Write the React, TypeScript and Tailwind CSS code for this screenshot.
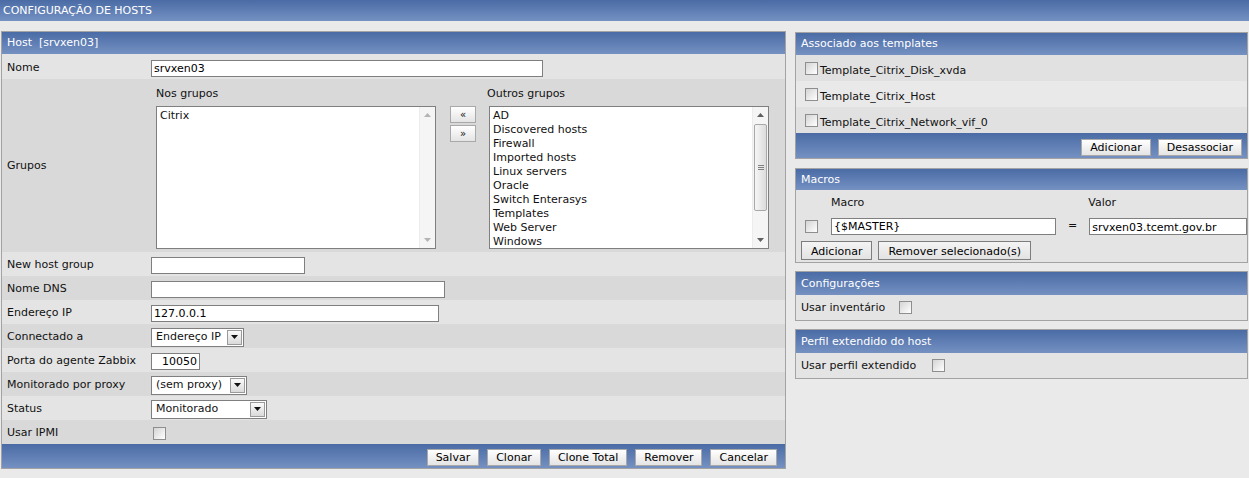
import type { ReactNode } from 'react'

const outros = [
  'AD',
  'Discovered hosts',
  'Firewall',
  'Imported hosts',
  'Linux servers',
  'Oracle',
  'Switch Enterasys',
  'Templates',
  'Web Server',
  'Windows',
]

function Header({ children, h = 'h-[22px]' }: { children: ReactNode; h?: string }) {
  return (
    <div className={`flex items-center bg-linear-to-b from-[#4a6ba5] to-[#7591c2] px-[5px] pt-px text-white ${h}`}>
      {children}
    </div>
  )
}

function Btn({ children }: { children: ReactNode }) {
  return (
    <button
      type="button"
      className="h-[17px] border border-[#a9a9a9] bg-linear-to-b from-white to-[#e4e4e4] px-[8px] pt-px leading-none text-black"
    >
      {children}
    </button>
  )
}

function GrayBtn({ children }: { children: ReactNode }) {
  return (
    <button
      type="button"
      className="h-[19px] border border-[#7d7d7d] bg-linear-to-b from-[#f4f4f4] to-[#e3e3e3] px-[9px] pt-px leading-none text-black"
    >
      {children}
    </button>
  )
}

function Check() {
  return (
    <span className="block h-[13px] w-[13px] border border-[#8e8e8e] bg-linear-to-br from-[#d4d4d4] to-white" />
  )
}

function TextBox({ value = '', w, right }: { value?: string; w: string; right?: boolean }) {
  return (
    <input
      readOnly
      defaultValue={value}
      className={`h-[17px] border border-[#7f7f7f] bg-white px-[2px] pt-px text-[11px] leading-none text-black outline-none ${w} ${right ? 'text-right' : ''}`}
    />
  )
}

function Select({ value, w }: { value: string; w: string }) {
  return (
    <div className={`flex h-[19px] items-center justify-between border border-[#7f7f7f] bg-white pl-[4px] pr-px ${w}`}>
      <span className="pt-px">{value}</span>
      <span className="flex h-[15px] w-[15px] items-center justify-center border border-[#9a9a9a] bg-linear-to-b from-[#fafafa] to-[#dadada]">
        <svg width="7" height="4" viewBox="0 0 7 4">
          <path d="M0 0h7L3.5 4z" fill="#111" />
        </svg>
      </span>
    </div>
  )
}

function Arrow({ up, color }: { up?: boolean; color: string }) {
  return (
    <svg width="7" height="4" viewBox="0 0 7 4">
      <path d={up ? 'M0 4h7L3.5 0z' : 'M0 0h7L3.5 4z'} fill={color} />
    </svg>
  )
}

function ListBox({ items, thumb }: { items: string[]; thumb?: boolean }) {
  return (
    <div className="flex h-[143px] w-[280px] border border-[#7f7f7f] bg-white">
      <div className="flex-1 pl-[3px] pt-[2px]">
        {items.map((it) => (
          <div key={it} className="h-[14px] leading-[14px]">
            {it}
          </div>
        ))}
      </div>
      <div className="flex w-[16px] flex-col items-center border-l border-[#ececec] bg-[#f5f5f5]">
        <div className="flex h-[16px] items-center">
          <Arrow up color={thumb ? '#606060' : '#b4b4b4'} />
        </div>
        <div className="flex w-full flex-1 flex-col px-px">
          {thumb && (
            <div className="mt-[1px] flex h-[87px] items-center justify-center rounded-[2px] border border-[#a8a8a8] bg-linear-to-r from-[#f6f6f6] to-[#dcdcdc]">
              <div className="flex flex-col gap-[1px]">
                <span className="block h-px w-[6px] bg-[#808080]" />
                <span className="block h-px w-[6px] bg-[#808080]" />
                <span className="block h-px w-[6px] bg-[#808080]" />
              </div>
            </div>
          )}
        </div>
        <div className="flex h-[16px] items-center">
          <Arrow color={thumb ? '#606060' : '#b4b4b4'} />
        </div>
      </div>
    </div>
  )
}

function Row({ label, dark, children }: { label: string; dark?: boolean; children: ReactNode }) {
  return (
    <div className={`flex h-[24px] items-center pt-[2px] ${dark ? 'bg-[#d9d9d9]' : 'bg-[#e4e4e4]'}`}>
      <div className="w-[149px] pl-[5px]">{label}</div>
      {children}
    </div>
  )
}

function HostPanel() {
  return (
    <div className="ml-px w-[785px] border border-[#a3a3a3]">
      <Header>Host&nbsp;&nbsp;[srvxen03]</Header>
      <div className="flex h-[25px] items-center bg-[#e4e4e4] pt-[3px]">
        <div className="w-[149px] pl-[5px]">Nome</div>
        <TextBox value="srvxen03" w="w-[392px]" />
      </div>
      <div className="flex h-[173px] items-center bg-[#d9d9d9]">
        <div className="w-[149px] pl-[5px] pt-[2px]">Grupos</div>
        <div className="flex h-full items-start pl-[5px] pt-[8px]">
          <div>
            <div className="h-[14px] leading-[14px]">Nos grupos</div>
            <div className="mt-[5px]">
              <ListBox items={['Citrix']} />
            </div>
          </div>
          <div className="ml-[14px] mt-[19px] flex flex-col gap-[2px]">
            <button type="button" className="h-[17px] w-[26px] border border-[#a9a9a9] bg-linear-to-b from-white to-[#e4e4e4] text-[10px] leading-none">
              «
            </button>
            <button type="button" className="h-[17px] w-[26px] border border-[#a9a9a9] bg-linear-to-b from-white to-[#e4e4e4] text-[10px] leading-none">
              »
            </button>
          </div>
          <div className="ml-[13px]">
            <div className="-ml-[2px] h-[14px] leading-[14px]">Outros grupos</div>
            <div className="mt-[5px]">
              <ListBox items={outros} thumb />
            </div>
          </div>
        </div>
      </div>
      <Row label="New host group">
        <TextBox w="w-[154px]" />
      </Row>
      <Row label="Nome DNS" dark>
        <TextBox w="w-[294px]" />
      </Row>
      <Row label="Endereço IP">
        <TextBox value="127.0.0.1" w="w-[288px]" />
      </Row>
      <Row label="Connectado a" dark>
        <Select value="Endereço IP" w="w-[93px]" />
      </Row>
      <Row label="Porta do agente Zabbix">
        <TextBox value="10050" w="w-[49px]" right />
      </Row>
      <Row label="Monitorado por proxy" dark>
        <Select value="(sem proxy)" w="w-[96px]" />
      </Row>
      <Row label="Status">
        <Select value="Monitorado" w="w-[116px]" />
      </Row>
      <Row label="Usar IPMI" dark>
        <span className="ml-[2px]">
          <Check />
        </span>
      </Row>
      <div className="flex h-[24px] items-center justify-end gap-[8px] bg-linear-to-b from-[#4a6ba5] to-[#7591c2] pr-[8px] pt-[2px]">
        <Btn>Salvar</Btn>
        <Btn>Clonar</Btn>
        <Btn>Clone Total</Btn>
        <Btn>Remover</Btn>
        <Btn>Cancelar</Btn>
      </div>
    </div>
  )
}

function SidePanels() {
  const templates = ['Template_Citrix_Disk_xvda', 'Template_Citrix_Host', 'Template_Citrix_Network_vif_0']
  return (
    <div className="mt-px w-[453px] shrink-0">
      <div className="border border-[#a3a3a3]">
        <Header>Associado aos templates</Header>
        {templates.map((t, i) => (
          <div key={t} className={`flex h-[26px] items-start gap-[2px] pl-[9px] pt-[7px] ${i === 1 ? 'bg-[#e9e9e9]' : 'bg-[#e1e1e1]'}`}>
            <Check />
            <span className="mt-[2px] leading-[14px]">{t}</span>
          </div>
        ))}
        <div className="flex h-[25px] items-center justify-end gap-[7px] bg-linear-to-b from-[#4a6ba5] to-[#7591c2] pr-[5px] pt-[3px]">
          <Btn>Adicionar</Btn>
          <Btn>Desassociar</Btn>
        </div>
      </div>

      <div className="mt-[9px] border border-[#a3a3a3] bg-[#e4e4e4]">
        <Header h="h-[21px]">Macros</Header>
        <div className="pb-[2px] pl-[5px] pt-[6px]">
          <div className="flex h-[14px] leading-[14px]">
            <span className="ml-[30px]">Macro</span>
            <span className="ml-[224px]">Valor</span>
          </div>
          <div className="mt-[8px] flex h-[17px] items-center">
            <span className="ml-[4px]">
              <Check />
            </span>
            <span className="ml-[13px]">
              <TextBox value="{$MASTER}" w="w-[225px]" />
            </span>
            <span className="ml-[12px] w-[23px]">=</span>
            <TextBox value="srvxen03.tcemt.gov.br" w="w-[170px]" />
          </div>
          <div className="mt-[6px] flex gap-[6px]">
            <GrayBtn>Adicionar</GrayBtn>
            <GrayBtn>Remover selecionado(s)</GrayBtn>
          </div>
        </div>
      </div>

      <div className="mt-[8px] border border-[#a3a3a3] bg-[#e4e4e4]">
        <Header h="h-[23px]">Configurações</Header>
        <div className="flex h-[25px] items-center pl-[5px]">
          <span className="pt-px">Usar inventário</span>
          <span className="ml-[14px]">
            <Check />
          </span>
        </div>
      </div>

      <div className="mt-[8px] border border-[#a3a3a3] bg-[#e4e4e4]">
        <Header h="h-[23px]">Perfil extendido do host</Header>
        <div className="flex h-[25px] items-center pl-[5px]">
          <span className="pt-px">Usar perfil extendido</span>
          <span className="ml-[16px]">
            <Check />
          </span>
        </div>
      </div>
    </div>
  )
}

export default function App() {
  return (
    <div className="h-[478px] w-[1249px] overflow-hidden bg-[#eaeaea] font-['DejaVu_Sans',Verdana,sans-serif] text-[11px] text-[#111]">
      <div className="flex h-[21px] items-center bg-linear-to-b from-[#4a6ba5] to-[#7591c2] px-[3px] pt-px text-white">
        CONFIGURAÇÃO DE HOSTS
      </div>
      <div className="mt-[10px] flex gap-[9px]">
        <HostPanel />
        <SidePanels />
      </div>
    </div>
  )
}
